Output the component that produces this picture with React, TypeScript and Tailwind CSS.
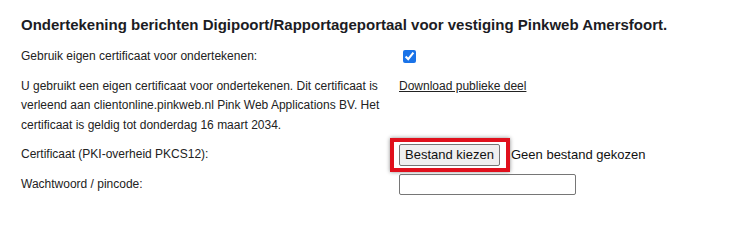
export default function App() {
  return (
    <div className="bg-white w-[742px] h-[206px] overflow-hidden text-[#222] font-['Liberation_Sans',Arial,sans-serif]">
      <div className="px-[21px] pt-[15px]">
        <h1 className="text-[15px] font-bold text-[#1c1c24] leading-[20px]">
          Ondertekening berichten Digipoort/Rapportageportaal voor vestiging Pinkweb Amersfoort.
        </h1>

        <div className="mt-[7px] grid grid-cols-[378px_1fr] text-[12px] leading-[19.5px]">
          <div className="py-[5px]">Gebruik eigen certificaat voor ondertekenen:</div>
          <div className="py-[5px] pl-[4px] flex items-center">
            <input type="checkbox" defaultChecked className="w-[13px] h-[13px] accent-[#1a73e8]" />
          </div>

          <div className="py-[5px]">
            U gebruikt een eigen certificaat voor ondertekenen. Dit certificaat is verleend aan
            clientonline.pinkweb.nl Pink Web Applications BV. Het certificaat is geldig tot donderdag
            16 maart 2034.
          </div>
          <div className="py-[5px]">
            <a href="#" className="underline text-[#222]">Download publieke deel</a>
          </div>

          <div className="py-[5px] flex items-center">Certificaat (PKI-overheid PKCS12):</div>
          <div className="py-[5px] flex items-center">
            <div className="-ml-[9px] -my-[7px] border-[4px] border-[#e0101c] pl-[5px] pr-[6px] py-[2px] shadow-[0_0_4px_rgba(0,0,0,0.45)]">
              <button className="h-[22px] w-[101px] border border-[#767676] rounded-[2px] bg-[#efefef] text-[13px] leading-[20px] text-[#111]">
                Bestand kiezen
              </button>
            </div>
            <span className="ml-[1px] text-[13px] text-[#111]">Geen bestand gekozen</span>
          </div>

          <div className="py-[5px] flex items-center">Wachtwoord / pincode:</div>
          <div className="py-[4px] flex items-center">
            <input type="password" className="w-[177px] h-[21px] border border-[#767676] rounded-[2px]" />
          </div>
        </div>
      </div>
    </div>
  );
}
